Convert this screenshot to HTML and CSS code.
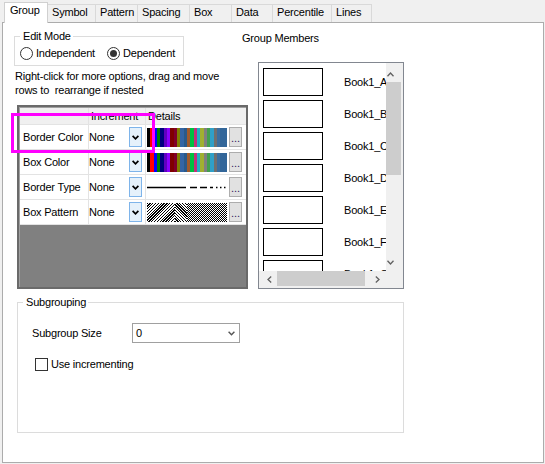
FILE: index.html
```html
<!DOCTYPE html>
<html>
<head>
<meta charset="utf-8">
<link rel="stylesheet" href="styles.css">
</head>
<body>
<div class="tabs">
  <div class="tab sel w-group">Group</div>
  <div class="tab w-symbol">Symbol</div>
  <div class="tab w-pattern">Pattern</div>
  <div class="tab w-spacing">Spacing</div>
  <div class="tab w-box">Box</div>
  <div class="tab w-data">Data</div>
  <div class="tab w-perc">Percentile</div>
  <div class="tab w-lines">Lines</div>
</div>
<div class="panel">
  <div class="top-row">
    <div class="left-col">
      <fieldset class="box edit-mode">
        <legend>Edit Mode</legend>
        <div class="radios">
          <label class="radio"><span class="circle"></span>Independent</label>
          <label class="radio on"><span class="circle"></span>Dependent</label>
        </div>
      </fieldset>
      <p class="help">Right-click for more options, drag and move<br>rows to&nbsp; rearrange if nested</p>
      <div class="grid">
        <div class="gtable">
          <div class="hc"></div>
          <div class="hc">Increment</div>
          <div class="hc">Details</div>

          <div class="c1">Border Color</div>
          <div class="c2"><span>None</span><span class="dd"><svg width="7" height="5" viewBox="0 0 7 5"><path d="M0.6 0.8 L3.5 3.8 L6.4 0.8" stroke="#000" stroke-width="1.7" fill="none"/></svg></span></div>
          <div class="c3"><div class="swatch colors"></div><div class="more">...</div></div>

          <div class="c1">Box Color</div>
          <div class="c2"><span>None</span><span class="dd"><svg width="7" height="5" viewBox="0 0 7 5"><path d="M0.6 0.8 L3.5 3.8 L6.4 0.8" stroke="#000" stroke-width="1.7" fill="none"/></svg></span></div>
          <div class="c3"><div class="swatch colors"></div><div class="more">...</div></div>

          <div class="c1">Border Type</div>
          <div class="c2"><span>None</span><span class="dd"><svg width="7" height="5" viewBox="0 0 7 5"><path d="M0.6 0.8 L3.5 3.8 L6.4 0.8" stroke="#000" stroke-width="1.7" fill="none"/></svg></span></div>
          <div class="c3"><svg class="swatch" width="80" height="19" viewBox="0 0 80 19"><path d="M0 9.5H39M43 9.5H50M53 9.5H60M63 9.5H66M69 9.5H70.5M73 9.5H74.5M77 9.5H78.5" stroke="#000" stroke-width="1.3" fill="none"/></svg><div class="more">...</div></div>

          <div class="c1">Box Pattern</div>
          <div class="c2"><span>None</span><span class="dd"><svg width="7" height="5" viewBox="0 0 7 5"><path d="M0.6 0.8 L3.5 3.8 L6.4 0.8" stroke="#000" stroke-width="1.7" fill="none"/></svg></span></div>
          <div class="c3"><div class="swatch pat"><div class="p1"></div><div class="p2"></div><div class="p3"></div></div><div class="more">...</div></div>
        </div>
      </div>
      <div class="highlight"></div>
    </div>
    <div class="right-col">
      <div class="gm-label">Group Members</div>
      <div class="listbox">
        <div class="items">
          <div class="item"><span class="swbox"></span>Book1_A</div>
          <div class="item"><span class="swbox"></span>Book1_B</div>
          <div class="item"><span class="swbox"></span>Book1_C</div>
          <div class="item"><span class="swbox"></span>Book1_D</div>
          <div class="item"><span class="swbox"></span>Book1_E</div>
          <div class="item"><span class="swbox"></span>Book1_F</div>
          <div class="item"><span class="swbox"></span>Book1_G</div>
        </div>
        <div class="vscroll">
          <div class="up"><svg width="7" height="5" viewBox="0 0 7 5"><path d="M0.5 4.2 L3.5 1 L6.5 4.2" stroke="#606060" stroke-width="1.3" fill="none"/></svg></div>
          <div class="vthumb"></div>
          <div class="spacer"></div>
          <div class="down"><svg width="7" height="5" viewBox="0 0 7 5"><path d="M0.5 0.8 L3.5 4 L6.5 0.8" stroke="#606060" stroke-width="1.3" fill="none"/></svg></div>
        </div>
        <div class="hscroll">
          <svg class="left" width="5" height="7" viewBox="0 0 5 7"><path d="M4.2 0.5 L1 3.5 L4.2 6.5" stroke="#606060" stroke-width="1.3" fill="none"/></svg>
          <div class="hthumb"></div>
          <svg class="right" width="5" height="7" viewBox="0 0 5 7"><path d="M0.8 0.5 L4 3.5 L0.8 6.5" stroke="#606060" stroke-width="1.3" fill="none"/></svg>
        </div>
        <div class="corner"></div>
      </div>
    </div>
  </div>
  <fieldset class="box subgrouping">
    <legend>Subgrouping</legend>
    <div class="sg-row">
      <span class="sg-label">Subgroup Size</span>
      <div class="combo"><span>0</span><svg width="7" height="5" viewBox="0 0 7 5"><path d="M0.6 0.8 L3.5 3.8 L6.4 0.8" stroke="#555" stroke-width="1.4" fill="none"/></svg></div>
    </div>
    <label class="check-row"><span class="checkbox"></span>Use incrementing</label>
  </fieldset>
</div>
</body>
</html>
```
FILE: styles.css
```css
html, body {
  margin: 0;
}
body {
  width: 545px;
  height: 464px;
  overflow: hidden;
  background: #f0f0f0;
  font-family: "Liberation Sans", Arial, sans-serif;
  font-size: 11px;
  line-height: 13px;
  letter-spacing: -0.2px;
  color: #000;
}

/* tabs */
.tabs {
  display: flex;
  align-items: flex-end;
  height: 22px;
  padding-left: 4px;
  box-sizing: border-box;
}
.tab {
  box-sizing: border-box;
  height: 18px;
  border: 1px solid #d9d9d9;
  border-bottom: none;
  margin-right: -1px;
  padding: 1px 0 0 4px;
  background: #f0f0f0;
  white-space: nowrap;
  flex: none;
}
.tab.sel {
  height: 21px;
  margin-bottom: -1px;
  background: #fff;
  position: relative;
  z-index: 1;
  padding-left: 5px;
  border-color: #d0d0d0;
}
.w-group { width: 44px; }
.w-symbol { width: 49px; }
.w-pattern { width: 43px; }
.w-spacing { width: 53px; }
.w-box { width: 43px; }
.w-data { width: 42px; }
.w-perc { width: 60px; }
.w-lines { width: 41px; }

/* panel */
.panel {
  box-sizing: border-box;
  height: 441px;
  margin: 0 1px 0 2px;
  border: 1px solid #acacac;
  background: #fff;
  padding: 7px 0 0 11px;
}
.top-row {
  display: flex;
  align-items: flex-start;
}
.left-col {
  width: 234px;
  flex: none;
  position: relative;
}

fieldset.box {
  margin: 0;
  border: 1px solid #dcdcdc;
  padding: 4px 5px 5px 5px;
  box-sizing: border-box;
  min-width: 0;
}
fieldset.box legend {
  padding: 0 2px 0 3px;
  line-height: 13px;
}
.edit-mode {
  width: 170px;
}
.radios {
  display: flex;
  align-items: center;
  height: 13px;
}
.radio {
  display: flex;
  align-items: center;
}
.radio + .radio {
  margin-left: 12px;
}
.circle {
  width: 13px;
  height: 13px;
  box-sizing: border-box;
  border: 1px solid #333;
  border-radius: 50%;
  margin-right: 3px;
  display: flex;
  align-items: center;
  justify-content: center;
  background: #fff;
}
.radio.on .circle::after {
  content: "";
  width: 7px;
  height: 7px;
  border-radius: 50%;
  background: #333;
}
.help {
  margin: 3px 0 0 1px;
  line-height: 14px;
}

/* grid */
.grid {
  margin: 8px 0 0 3px;
  width: 231px;
  height: 184px;
  box-sizing: border-box;
  border: 2px solid #6a6a6a;
  padding: 1px 0 0 1px;
  background: #808080;
  box-shadow: inset 1px 1px 0 #a0a0a0;
}
.gtable {
  display: grid;
  grid-template-columns: 68px 56px 100px;
  grid-template-rows: 16px repeat(4, 24px);
  gap: 1px;
  background: #e3e3e3;
  padding-bottom: 1px;
}
.hc {
  background: #f0f0f0;
  padding-left: 2px;
  line-height: 16px;
  overflow: hidden;
  white-space: nowrap;
}
.c1 {
  background: #fff;
  padding-left: 3px;
  line-height: 24px;
  white-space: nowrap;
}
.c2 {
  background: #fff;
  display: flex;
  align-items: center;
  justify-content: space-between;
  padding-right: 3px;
}
.dd {
  width: 13px;
  height: 20px;
  box-sizing: border-box;
  border: 1px solid #7eb4ea;
  background: #e5f1fb;
  display: flex;
  align-items: center;
  justify-content: center;
}
.c3 {
  background: #fff;
  display: flex;
  align-items: center;
  padding-left: 1px;
  gap: 2px;
}
.swatch {
  width: 80px;
  height: 19px;
  flex: none;
  display: block;
}
.colors {
  background: linear-gradient(90deg,
    #000000 0 3.33px, #ff0000 3.33px 6.67px, #0000ff 6.67px 10px, #008000 10px 13.33px,
    #000080 13.33px 16.67px, #6000c0 16.67px 20px, #8a00ff 20px 23.33px, #800000 23.33px 26.67px,
    #80002a 26.67px 30px, #808000 30px 33.33px, #3465a4 33.33px 36.67px, #2a5a8a 36.67px 40px,
    #a05a2c 40px 43.33px, #00c040 43.33px 46.67px, #c0307a 46.67px 50px, #20b0c0 50px 53.33px,
    #a0b030 53.33px 56.67px, #808080 56.67px 60px, #40a050 60px 63.33px, #30a0c8 63.33px 66.67px,
    #707070 66.67px 70px, #3c6ea0 70px 73.33px, #336699 73.33px 80px);
}
.pat {
  display: flex;
}
.p1 {
  width: 28px;
  background: repeating-linear-gradient(135deg, #000 0 0.9px, #fff 0.9px 2px);
}
.p2 {
  width: 12px;
  background: repeating-linear-gradient(45deg, #000 0 0.9px, #fff 0.9px 2px);
}
.p3 {
  flex: 1;
  background: conic-gradient(#000 25%, #fff 0 50%, #000 0 75%, #fff 0) 0 0 / 2px 2px;
}
.more {
  width: 13px;
  height: 20px;
  box-sizing: border-box;
  border: 1px solid #adadad;
  background: #e1e1e1;
  line-height: 18px;
  padding-top: 1px;
  text-align: center;
  color: #302060;
  letter-spacing: 0;
  flex: none;
}
.highlight {
  position: absolute;
  left: -3px;
  top: 83px;
  width: 144px;
  height: 40px;
  box-sizing: border-box;
  border: 3px solid #ff00ff;
}

/* right column */
.right-col {
  flex: none;
}
.gm-label {
  margin: 2px 0 0 -6px;
  line-height: 13px;
}
.listbox {
  margin: 17px 0 0 10px;
  width: 146px;
  height: 227px;
  box-sizing: border-box;
  border: 1px solid #828790;
  display: grid;
  grid-template-columns: 127px 17px;
  grid-template-rows: 208px 17px;
}
.items {
  overflow: hidden;
  padding: 5px 0 0 4px;
  box-sizing: border-box;
}
.item {
  display: flex;
  align-items: center;
  height: 28px;
  margin-bottom: 4px;
  white-space: nowrap;
}
.swbox {
  width: 60px;
  height: 28px;
  box-sizing: border-box;
  border: 1px solid #000;
  flex: none;
  margin-right: 21px;
}
.vscroll {
  background: #f0f0f0;
  display: flex;
  flex-direction: column;
}
.up {
  height: 19px;
  box-sizing: border-box;
  padding: 9px 0 0 1px;
  line-height: 0;
}
.vthumb {
  height: 93px;
  width: 15px;
  background: #cdcdcd;
}
.spacer {
  flex: 1;
}
.down {
  height: 17px;
  box-sizing: border-box;
  padding: 6px 0 0 1px;
  line-height: 0;
}
.hscroll {
  background: #f0f0f0;
  display: flex;
  align-items: center;
}
.hscroll .left {
  margin-left: 8px;
  flex: none;
}
.hthumb {
  align-self: flex-start;
  margin-left: 5px;
  width: 88px;
  height: 15px;
  background: #cdcdcd;
  flex: none;
}
.hscroll .right {
  margin-left: 10px;
  flex: none;
}
.corner {
  background: #f0f0f0;
}

/* subgrouping */
.subgrouping {
  margin: 7px 0 0 3px !important;
  width: 387px;
  height: 137px;
  padding-top: 14px !important;
}
.sg-row {
  display: flex;
  align-items: center;
  height: 20px;
  padding-left: 9px;
}
.sg-label {
  width: 100px;
}
.combo {
  width: 108px;
  height: 20px;
  box-sizing: border-box;
  border: 1px solid #a0a0a0;
  display: flex;
  align-items: center;
  justify-content: space-between;
  padding: 0 4px 0 3px;
  background: #fff;
}
.check-row {
  display: flex;
  align-items: center;
  margin: 15px 0 0 12px;
}
.checkbox {
  width: 13px;
  height: 13px;
  box-sizing: border-box;
  border: 1px solid #333;
  background: #fff;
  margin-right: 3px;
}
```
